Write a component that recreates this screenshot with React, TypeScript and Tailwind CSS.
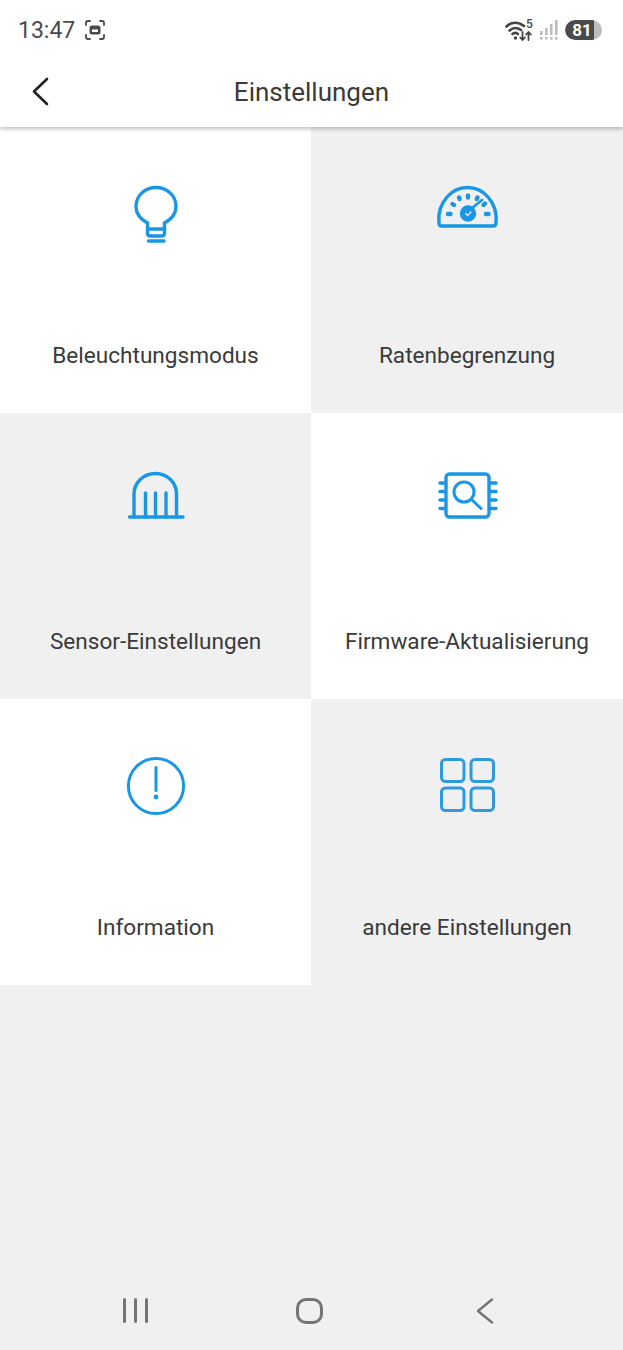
import type { ReactNode } from 'react';

const BLUE = '#1a96e6';

function Icon({ children, row, shift = 0 }: { children: ReactNode; row: number; shift?: number }) {
  const box = row === 0 ? '0 0 80 80' : row === 1 ? '0 -4 80 80' : '0 -8 80 80';
  return (
    <svg width="80" height="80" viewBox={box} fill="none" stroke={BLUE} strokeWidth="3.4" strokeLinecap="round" strokeLinejoin="round">
      <g transform={`translate(${shift} 0)`}>{children}</g>
    </svg>
  );
}

function BulbIcon() {
  return (
    <Icon row={0}>
      <path d="M31.5 53C25 49.5 20 44 20 36.5C20 25.5 29 17.5 40 17.5C51 17.5 60 25.5 60 36.5C60 44 55 49.5 48.5 53" />
      <path d="M31.5 53V63C31.5 65 32.5 66 34.5 66H45.5C47.5 66 48.5 65 48.5 63V53" />
      <path d="M31.5 59H48.5" />
      <path d="M32.5 71H48" />
    </Icon>
  );
}

function GaugeIcon() {
  return (
    <Icon row={0} shift={1}>
      <path d="M13.5 56H65C67 56 68 55 68 53C69 44 67 35 60 27C54 20 47 17.5 39.5 17.5C32 17.5 25 20 19 27C12 35 10 44 11 53C11 55 12 56 13.5 56Z" />
      <g strokeWidth="4.4">
        <path d="M20 44H22.5" />
        <path d="M24.5 34L26 35" />
        <path d="M31 27.5L31.7 29" />
        <path d="M40 25.5V27.5" />
        <path d="M49.5 27.5L48.7 29" />
        <path d="M57 33.5L55.5 35" />
        <path d="M58 44H60.5" />
      </g>
      <path d="M44 38L54 30" strokeWidth="2.8" />
      <circle cx="40" cy="43.5" r="6.5" fill={BLUE} />
      <path d="M37.6 43.5L39.6 45.5L43 42" stroke="#f0f0f1" strokeWidth="1.2" />
    </Icon>
  );
}

function SensorIcon() {
  return (
    <Icon row={1}>
      <path d="M18 57V34.5C18 22.5 27.5 13.5 39.5 13.5C51.5 13.5 60.5 22.5 60.5 34.5V57" />
      <path d="M29.5 33V57M39.5 33V57M50 33V57" />
      <path d="M13.5 57H67" />
    </Icon>
  );
}

function ChipIcon() {
  return (
    <Icon row={1} shift={1}>
      <rect x="18" y="14" width="43" height="43" rx="3.5" />
      <path d="M12 23H17M12 31.5H17M12 40H17M12 48.5H17" />
      <path d="M62.5 23H68M62.5 31.5H68M62.5 40H68M62.5 48.5H68" />
      <circle cx="36" cy="32" r="10" strokeWidth="3" />
      <path d="M43.5 39.5L53 48.5" strokeWidth="3" />
    </Icon>
  );
}

function InfoIcon() {
  return (
    <Icon row={2}>
      <circle cx="40" cy="36" r="27.6" strokeWidth="3" />
      <path d="M40 17.5V40.5" strokeWidth="3" />
      <circle cx="40" cy="47" r="2.4" fill={BLUE} stroke="none" />
    </Icon>
  );
}

function GridIcon() {
  return (
    <Icon row={2} shift={1.5}>
      <g stroke="#2f9ae2" strokeWidth="3">
        <rect x="13" y="9.5" width="22.5" height="22" rx="4" />
        <rect x="42.5" y="9.5" width="22.5" height="22" rx="4" />
        <rect x="13" y="38" width="22.5" height="22.5" rx="4" />
        <rect x="42.5" y="38" width="22.5" height="22.5" rx="4" />
      </g>
    </Icon>
  );
}

const cells = [
  { label: 'Beleuchtungsmodus', icon: <BulbIcon />, white: true },
  { label: 'Ratenbegrenzung', icon: <GaugeIcon />, white: false },
  { label: 'Sensor-Einstellungen', icon: <SensorIcon />, white: false },
  { label: 'Firmware-Aktualisierung', icon: <ChipIcon />, white: true },
  { label: 'Information', icon: <InfoIcon />, white: true },
  { label: 'andere Einstellungen', icon: <GridIcon />, white: false },
];

function StatusBar() {
  return (
    <div className="h-[60px] flex items-center justify-between pl-[18px] pr-[21px] text-[#4a4a4a]">
      <div className="flex items-center gap-[9px]">
        <span className="text-[23px] leading-none">13:47</span>
        <svg width="22" height="22" viewBox="0 0 22 22" fill="none" stroke="#4a4a4a" strokeWidth="1.8" strokeLinecap="round">
          <path d="M2 6V4C2 2.8 2.8 2 4 2H6M16 2H18C19.2 2 20 2.8 20 4V6M20 16V18C20 19.2 19.2 20 18 20H16M6 20H4C2.8 20 2 19.2 2 18V16" />
          <rect x="5.5" y="6.5" width="11" height="9" rx="2.5" fill="#4a4a4a" stroke="none" />
          <rect x="8" y="10.5" width="6" height="2.5" fill="#fff" stroke="none" />
        </svg>
      </div>
      <div className="flex items-center gap-[7px]">
        <svg width="28" height="24" viewBox="0 0 28 24" fill="none" stroke="#444" strokeLinecap="round">
          <path d="M1.5 8.5C6.5 3.5 13.5 3.5 19 8" strokeWidth="2.6" />
          <path d="M4.5 12.5C8 9.5 12.5 9.5 16 12" strokeWidth="2.6" />
          <path d="M7.5 16C9 14.5 11 14.5 13 16" strokeWidth="2.6" />
          <circle cx="10.5" cy="20" r="1.8" fill="#444" stroke="none" />
          <path d="M17.5 14V22M15.2 19.5L17.5 22L19.8 19.5" strokeWidth="1.8" />
          <path d="M23.5 22V14M21.2 16.5L23.5 14L25.8 16.5" strokeWidth="1.8" />
          <text x="21" y="10" fontSize="12" fontFamily="Roboto, sans-serif" fontWeight="500" fill="#444" stroke="none">5</text>
        </svg>
        <svg width="18" height="20" viewBox="0 0 18 20" fill="#bdbdbd">
          <rect x="0" y="11" width="2.6" height="4" />
          <rect x="5" y="8" width="2.6" height="7" />
          <rect x="10" y="4" width="2.6" height="11" />
          <rect x="15" y="0" width="2.6" height="15" />
          <rect x="0" y="17" width="2.6" height="2.6" />
          <rect x="5" y="17" width="2.6" height="2.6" />
          <rect x="10" y="17" width="2.6" height="2.6" />
          <rect x="15" y="17" width="2.6" height="2.6" />
        </svg>
        <div className="w-[37px] h-[20px] rounded-full bg-[#bdbdbd] overflow-hidden">
          <div className="w-[29px] h-full bg-[#4a4a4a] rounded-l-full flex items-center justify-center pl-[5px] text-white text-[17px] font-bold leading-none">
            81
          </div>
        </div>
      </div>
    </div>
  );
}

function Header() {
  return (
    <div className="relative h-[67px] bg-white flex items-center justify-center">
      <svg className="absolute left-[30px] top-[16px]" width="22" height="30" viewBox="0 0 22 30" fill="none" stroke="#222" strokeWidth="2.6" strokeLinecap="round" strokeLinejoin="round">
        <path d="M17 3L4 15.5L17 28" />
      </svg>
      <span className="text-[26px] leading-none text-[#3a3a3a] pb-[4px]">Einstellungen</span>
    </div>
  );
}

function NavBar() {
  return (
    <div className="h-[80px] bg-[#f0f0f2] flex pl-[47px] pt-[28px]">
      <div className="w-[175px] flex justify-center gap-[8px] pl-[1px]">
        <div className="w-[3px] h-[25px] rounded-full bg-[#747474]" />
        <div className="w-[3px] h-[25px] rounded-full bg-[#747474]" />
        <div className="w-[3px] h-[25px] rounded-full bg-[#747474]" />
      </div>
      <div className="w-[175px] flex justify-center">
        <div className="w-[27px] h-[26px] rounded-[10px] border-[3px] border-[#747474]" />
      </div>
      <div className="w-[175px] flex justify-center">
        <svg width="18" height="26" viewBox="0 0 18 26" fill="none" stroke="#747474" strokeWidth="2.4" strokeLinecap="round" strokeLinejoin="round">
          <path d="M16 1.5L2 13L16 24.5" />
        </svg>
      </div>
    </div>
  );
}

export default function App() {
  return (
    <div className="w-[623px] h-[1350px] flex flex-col bg-[#f0f0f1] font-['Roboto',sans-serif] overflow-hidden">
      <div className="relative z-10 bg-white shadow-[0_2px_4px_rgba(0,0,0,0.25)]">
        <StatusBar />
        <Header />
      </div>
      <div className="grid grid-cols-[311px_312px]">
        {cells.map((cell) => (
          <div key={cell.label} className={`h-[286px] flex flex-col items-center pt-[43px] ${cell.white ? 'bg-white' : 'bg-[#f0f0f1]'}`}>
            {cell.icon}
            <span className="mt-[91px] text-[22.6px] leading-[30px] text-[#3a3a3a]">{cell.label}</span>
          </div>
        ))}
      </div>
      <div className="flex-1" />
      <NavBar />
    </div>
  );
}
